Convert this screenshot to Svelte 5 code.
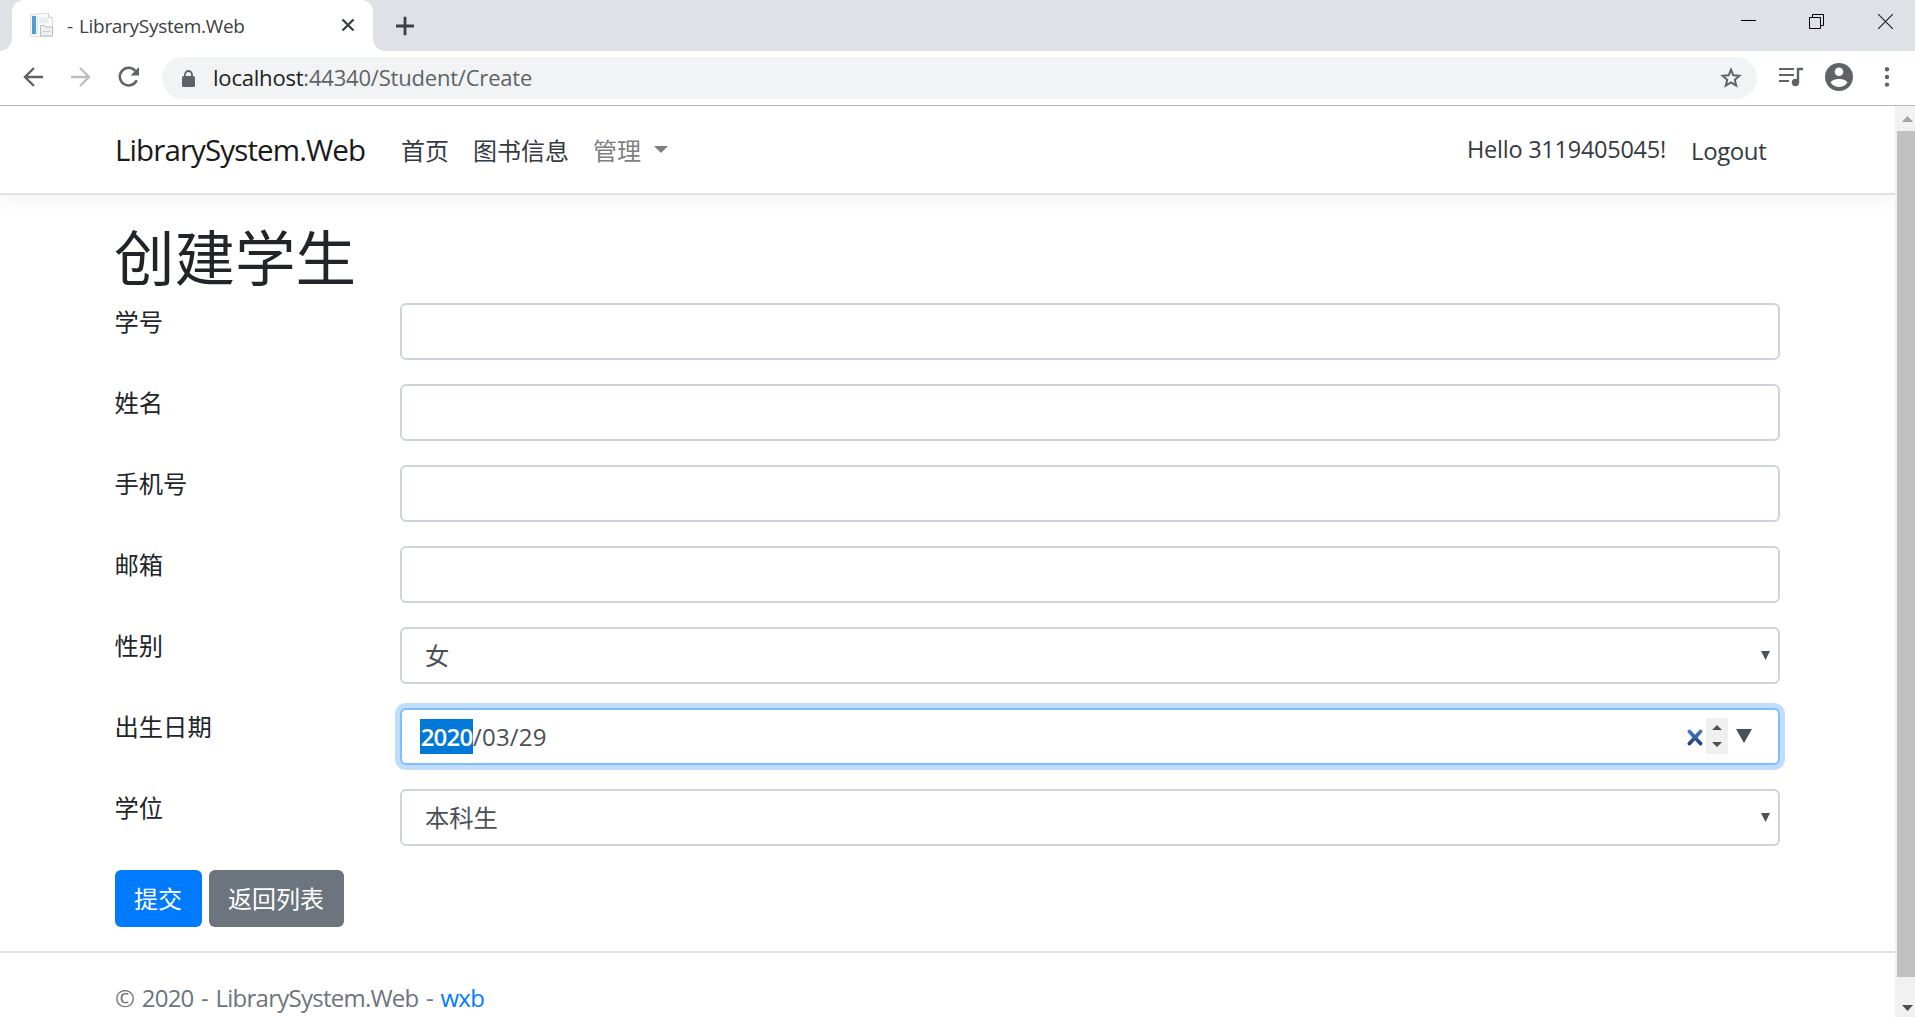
<script lang="ts">
  type Field = {
    id: string;
    label: string;
    kind: "text" | "select" | "date";
    value?: string;
  };

  const fields: Field[] = [
    { id: "number", label: "学号", kind: "text" },
    { id: "name", label: "姓名", kind: "text" },
    { id: "phone", label: "手机号", kind: "text" },
    { id: "email", label: "邮箱", kind: "text" },
    { id: "gender", label: "性别", kind: "select", value: "女" },
    { id: "birthday", label: "出生日期", kind: "date" },
    { id: "degree", label: "学位", kind: "select", value: "本科生" },
  ];
</script>

<div class="browser">
  <div class="tab-strip">
    <div class="tab">
      <svg class="favicon" width="24" height="24" viewBox="0 0 24 24">
        <path d="M.5 1.500h7v-1h11l4 4v19H.5z" fill="#f8f9fa" stroke="#dde0e3" />
        <path d="M18.5.5v4h4" fill="#fff" stroke="#c9cdd1" />
        <path d="M2 3h4v18H2z" fill="#4f9dd3" />
        <path d="M9 4.500h9v6H9z" fill="#e9ecf1" />
        <path d="M7.500 3v18" stroke="#e0e4ea" />
        <path d="M10.500 16v-3.500h4l1 1.500h7v9h-12z" fill="#eceff3" stroke="#b9bec5" />
        <path d="M13 18.500h7" stroke="#c6ccd4" />
      </svg>
      <span class="tab-title">- LibrarySystem.Web</span>
      <svg class="tab-close" width="14" height="14" viewBox="0 0 14 14">
        <path d="M1.500 1.500l11 11M12.500 1.500l-11 11" stroke="#3c4043" stroke-width="2.300" />
      </svg>
    </div>
    <svg class="new-tab" width="18" height="20" viewBox="0 0 18 20">
      <path d="M0 10h18M9 .7v18.600" stroke="#3c4043" stroke-width="2.800" />
    </svg>
    <div class="window-buttons">
      <svg class="minimize" width="15" height="15" viewBox="0 0 15 15"><path d="M0 6.500h15" stroke="#000" /></svg>
      <svg width="15" height="15" viewBox="0 0 15 15">
        <path d="M.5 3.500h11v11H.5zM3.500 3.500v-3h11v11h-3" fill="none" stroke="#000" />
      </svg>
      <svg width="15" height="15" viewBox="0 0 15 15">
        <path d="M0 0l15 15M15 0L0 15" stroke="#222" stroke-width="1.200" />
      </svg>
    </div>
  </div>

  <div class="toolbar">
    <svg class="back" width="20" height="20" viewBox="0 0 20 20">
      <path d="M20 10H2M11 1l-9 9 9 9" fill="none" stroke="#5f6368" stroke-width="2.400" />
    </svg>
    <svg class="forward" width="20" height="20" viewBox="0 0 20 20">
      <path d="M0 10h18M9 1l9 9-9 9" fill="none" stroke="#bcbec0" stroke-width="2.400" />
    </svg>
    <svg class="reload" width="22" height="22" viewBox="0 0 22 22">
      <path d="M18.700 14.200A8.800 8.800 0 1 1 17.400 5" fill="none" stroke="#5f6368" stroke-width="2.500" />
      <path d="M21 1v8.500h-8.500z" fill="#5f6368" />
    </svg>
    <div class="omnibox">
      <svg class="lock" width="13" height="17" viewBox="0 0 13 17">
        <path d="M3 7V4.500a3.500 3.500 0 0 1 7 0V7" fill="none" stroke="#5f6368" stroke-width="1.800" />
        <rect y="6" width="13" height="11" rx="1.500" fill="#5f6368" />
      </svg>
      <span class="url"><b>localhost</b>:44340/Student/Create</span>
      <svg class="star" width="22" height="22" viewBox="0 0 22 22">
        <path
          d="M11 2.700l2.300 5.600 6.100.5-4.600 4 1.400 5.900-5.200-3.200-5.200 3.200 1.400-5.900-4.600-4 6.100-.5z"
          fill="none"
          stroke="#5f6368"
          stroke-width="2"
        />
      </svg>
    </div>
    <svg class="queue" width="24" height="20" viewBox="0 0 24 20">
      <path d="M0 2h15M0 8h15M0 14h10" stroke="#5f6368" stroke-width="2.200" />
      <path d="M24 2h-5v13" fill="none" stroke="#5f6368" stroke-width="2.400" />
      <circle cx="16.500" cy="15.500" r="3.700" fill="#5f6368" />
    </svg>
    <svg class="avatar" width="28" height="28" viewBox="0 0 28 28">
      <circle cx="14" cy="14" r="14" fill="#5f6368" />
      <circle cx="14" cy="8.800" r="4.300" fill="#fff" />
      <path d="M5.600 19.500C7.500 14.800 20.500 14.800 22.400 19.500C19 25.400 9 25.400 5.600 19.500z" fill="#fff" />
    </svg>
    <svg class="dots" width="6" height="20" viewBox="0 0 6 20" fill="#5f6368">
      <circle cx="3" cy="2.300" r="2.200" />
      <circle cx="3" cy="10" r="2.200" />
      <circle cx="3" cy="17.600" r="2.200" />
    </svg>
  </div>

  <div class="viewport">
    <div class="page">
      <header>
        <nav class="container">
          <a class="brand" href="#home">LibrarySystem.Web</a>
          <a class="nav-link" href="#home">首页</a>
          <a class="nav-link" href="#books">图书信息</a>
          <a class="nav-link muted" href="#manage">管理<i class="caret"></i></a>
          <span class="hello">Hello 3119405045!</span>
          <button class="logout" type="button">Logout</button>
        </nav>
      </header>

      <main class="container">
        <h1>创建学生</h1>
        <form>
          {#each fields as field (field.id)}
            <div class="row">
              <label for={field.id}>{field.label}</label>
              {#if field.kind === "text"}
                <input class="control" id={field.id} type="text" />
              {:else if field.kind === "select"}
                <div class="control select" id={field.id}>
                  <span>{field.value}</span>
                  <svg width="9" height="9" viewBox="0 0 9 9"><path d="M0 0h9L4.500 9z" fill="#495057" /></svg>
                </div>
              {:else}
                <div class="control date focused" id={field.id}>
                  <span class="year">2020</span><span class="rest">/03/29</span>
                  <svg class="clear" width="16" height="17" viewBox="0 0 16 17">
                    <defs>
                      <linearGradient id="clear-fill" x1="0" y1="0" x2="0" y2="1">
                        <stop offset="0" stop-color="#4379c4" />
                        <stop offset="1" stop-color="#24427c" />
                      </linearGradient>
                    </defs>
                    <path
                      d="M2.500 2.500l11 12M13.500 2.500l-11 12"
                      stroke="url(#clear-fill)"
                      stroke-width="3.800"
                      stroke-linecap="round"
                    />
                  </svg>
                  <svg class="spinner" width="22" height="36" viewBox="0 0 22 36">
                    <path d="M0 0h22v36H0z" fill="#f0f0f0" />
                    <path d="M6 12l5-5 5 5zM6 24l5 5 5-5z" fill="#505050" />
                  </svg>
                  <svg class="picker" width="16" height="14" viewBox="0 0 16 14">
                    <path d="M0 0h16L8 14z" fill="#495057" />
                  </svg>
                </div>
              {/if}
            </div>
          {/each}
          <div class="actions">
            <button class="btn primary" type="button">提交</button>
            <button class="btn secondary" type="button">返回列表</button>
          </div>
        </form>
      </main>

      <footer>
        <div class="container">© 2020 - LibrarySystem.Web - <a href="#wxb">wxb</a></div>
      </footer>
    </div>

    <div class="scrollbar">
      <svg width="20" height="25" viewBox="0 0 20 25"><path d="M7 16l5.500-6 5.500 6z" fill="#a3a3a3" /></svg>
      <div class="thumb"></div>
      <svg width="20" height="40" viewBox="0 0 20 40"><path d="M7 28h11l-5.500 6z" fill="#505050" /></svg>
    </div>
  </div>
</div>

<style>
  :global(body) {
    overflow: hidden;
    background: #fff;
  }

  .browser,
  .browser * {
    box-sizing: border-box;
  }

  .browser {
    display: flex;
    flex-direction: column;
    width: 1915px;
    height: 1017px;
    font-family: "Open Sans", "Noto Sans CJK SC", sans-serif;
    font-weight: 400;
    color: #212529;
  }

  svg {
    display: block;
    flex: none;
  }

  a {
    color: inherit;
    text-decoration: none;
  }

  /* Tab strip */
  .tab-strip {
    display: flex;
    flex: none;
    align-items: center;
    height: 51px;
    padding-left: 12px;
    background: #dee1e6;
  }

  .tab {
    position: relative;
    display: flex;
    align-items: center;
    width: 361px;
    height: 51px;
    padding: 0 18px;
    border-radius: 12px 12px 0 0;
    background: #fff;
  }

  .tab::before,
  .tab::after {
    content: "";
    position: absolute;
    bottom: 0;
    width: 12px;
    height: 12px;
  }

  .tab::before {
    left: -12px;
    background: radial-gradient(circle at 0 0, transparent 11.5px, #fff 12px);
  }

  .tab::after {
    right: -12px;
    background: radial-gradient(circle at 100% 0, transparent 11.5px, #fff 12px);
  }

  .favicon {
    margin-top: -1px;
  }

  .tab-title {
    flex: 1;
    margin-left: 13px;
    font-size: 19px;
    letter-spacing: -0.3px;
    word-spacing: 1.5px;
    line-height: 24px;
    white-space: nowrap;
    color: #3c4043;
  }

  .tab-close {
    margin-bottom: 1px;
  }

  .new-tab {
    margin-left: 23px;
  }

  .window-buttons {
    display: flex;
    gap: 54px;
    margin: 0 22px 8px auto;
  }

  .minimize {
    margin-right: -1px;
  }

  /* Toolbar */
  .toolbar {
    display: flex;
    flex: none;
    align-items: center;
    height: 55px;
    padding: 0 25px 2px 23px;
    border-bottom: 1px solid #b5b6b8;
  }

  .forward {
    margin-left: 28px;
  }

  .reload {
    margin-left: 27px;
  }

  .omnibox {
    display: flex;
    align-items: center;
    width: 1596px;
    height: 42px;
    margin: 2px 0 0 22px;
    padding: 0 15px 0 20px;
    border-radius: 21px;
    background: #f1f3f4;
  }

  .url {
    flex: 1;
    margin: -2px 0 0 18px;
    font-size: 22px;
    letter-spacing: -0.2px;
    line-height: 30px;
    color: #5f6368;
  }

  .url b {
    font-weight: inherit;
    color: #202124;
  }

  .queue {
    margin-left: 22px;
  }

  .avatar {
    margin-left: 22px;
  }

  .dots {
    margin-left: 31px;
  }

  /* Page */
  .viewport {
    display: flex;
    flex: 1;
    min-height: 0;
  }

  .page {
    width: 1895px;
    overflow: hidden;
    font-size: 24px;
    line-height: 36px;
  }

  .container {
    width: 1710px;
    margin: 0 auto;
    padding: 0 22.5px;
  }

  header {
    height: 89px;
    border-bottom: 2px solid #dee2e6;
    box-shadow: 0 6px 18px rgba(0, 0, 0, 0.05);
  }

  nav {
    display: flex;
    align-items: center;
    height: 89px;
    white-space: nowrap;
  }

  .brand {
    width: 262px;
    margin-top: -1px;
    font-size: 29.5px;
    letter-spacing: -0.88px;
    color: #1a1a1a;
  }

  .nav-link {
    margin-left: 24px;
    color: #343a40;
  }

  .muted {
    display: flex;
    align-items: center;
    color: #808080;
  }

  .caret {
    margin: -3px 0 0 13px;
    border: 7px solid transparent;
    border-top-color: #808080;
    border-bottom: 0;
  }

  .hello {
    width: 224px;
    margin: 0 0 4px auto;
    padding-left: 1px;
    font-size: 23.5px;
    letter-spacing: -0.25px;
    color: #343a40;
  }

  .logout {
    width: 90px;
    padding: 0 0 0 1px;
    border: 0;
    background: none;
    font: inherit;
    letter-spacing: -0.4px;
    text-align: left;
    color: #343a40;
  }

  h1 {
    height: 84px;
    margin: 0 0 0 -1px;
    padding-top: 27px;
    font-size: 60.5px;
    font-weight: 400;
    line-height: 72px;
  }

  form {
    padding-top: 24px;
  }

  .row {
    display: flex;
    height: 57px;
    margin-bottom: 24px;
  }

  label {
    width: 285px;
    padding-top: 1px;
    font-size: 24.3px;
    text-indent: -0.5px;
  }

  .control {
    width: 1380px;
    height: 57px;
    border: 2px solid #ced4da;
    border-radius: 6px;
    background: #fff;
    color: #495057;
  }

  .select {
    display: flex;
    align-items: center;
    justify-content: space-between;
    padding: 0 8px 0 23px;
  }

  .select span {
    font-size: 24.3px;
  }

  .date {
    display: flex;
    align-items: center;
    padding: 0 26px 0 18px;
  }

  .focused {
    border-color: #80bdff;
    box-shadow: 0 0 0 5px #bfdeff;
  }

  .year {
    width: 53px;
    height: 35px;
    line-height: 36px;
    letter-spacing: -0.8px;
    text-align: center;
    background: #0078d7;
    font-weight: 600;
    color: #fff;
  }

  .rest {
    letter-spacing: 0.2px;
  }

  .clear {
    margin: 2px 3px 0 auto;
  }

  .spinner {
    margin-top: -1px;
  }

  .picker {
    margin: -1px 0 0 8px;
  }

  .actions {
    display: flex;
    gap: 7px;
  }

  .btn {
    height: 57px;
    padding: 1px 1px 0 0;
    border: 0;
    border-radius: 6px;
    font: inherit;
    color: #fff;
  }

  .primary {
    width: 87px;
    background: #007bff;
  }

  .secondary {
    width: 135px;
    background: #6c757d;
  }

  footer {
    margin-top: 24px;
    border-top: 2px solid #dee2e6;
    letter-spacing: -0.75px;
    word-spacing: 2px;
    line-height: 90px;
    color: #6c757d;
  }

  footer a {
    color: #007bff;
  }

  /* Scrollbar */
  .scrollbar {
    display: flex;
    flex-direction: column;
    width: 20px;
    background: #f1f1f1;
  }

  .thumb {
    flex: 1;
    margin-left: 2px;
    background: #c1c1c1;
  }
</style>
